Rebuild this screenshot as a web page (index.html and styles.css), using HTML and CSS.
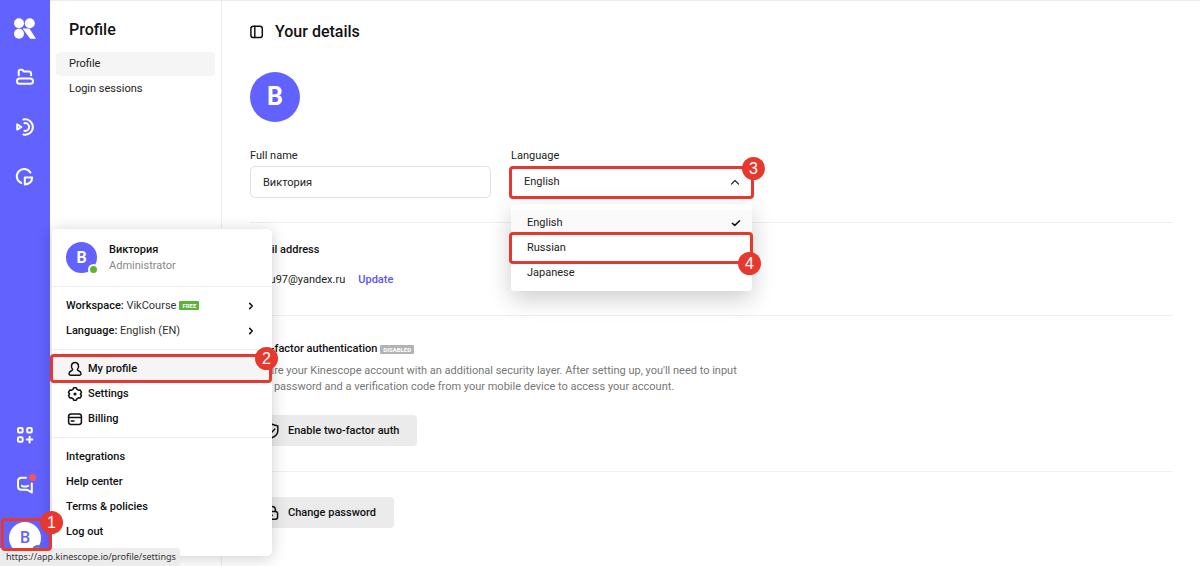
FILE: index.html
```
<!DOCTYPE html>
<html lang="en">
<head>
<meta charset="utf-8">
<title>Profile</title>
<link rel="stylesheet" href="styles.css">
</head>
<body>
<div class="app">
  <nav class="rail" aria-label="Main">
    <a class="rail-link logo" href="#" aria-label="Kinescope"><svg width="22" height="22" viewBox="0 0 22 22"><circle cx="5" cy="5.3" r="5"/><circle cx="15.8" cy="5.3" r="5"/><circle cx="5" cy="15.8" r="5"/><path d="M8.5 10.6H15.5L22 20.8H16.2L10.8 13.5Z"/></svg></a>
    <a class="rail-link" href="#" aria-label="Projects"><svg class="line" width="20" height="20" viewBox="0 0 20 20"><path d="M3.7 8.3V4.6Q3.7 2.8 5.4 2.8H7.2L9 4.6H14Q16.1 4.6 16.1 7V8.3"/><rect x="2" y="11.4" width="16" height="5.4" rx="2.6"/></svg></a>
    <a class="rail-link" href="#" aria-label="Live"><svg class="line" width="20" height="20" viewBox="0 0 20 20"><path d="M2.2 7.4V12.6L6.4 10Z"/><path d="M9.4 6.2A3.9 3.9 0 1 1 9.4 13.8"/><path d="M8.4 2.5A7.7 7.7 0 1 1 8.4 17.5"/></svg></a>
    <a class="rail-link" href="#" aria-label="Analytics"><svg class="line" width="20" height="20" viewBox="0 0 20 20"><path d="M15.4 5.6A7.3 7.3 0 1 0 6.2 16"/><path d="M9.8 10.4H17.2Q17 16.8 9.8 17.4Z"/></svg></a>
    <span class="rail-space"></span>
    <a class="rail-link" href="#" aria-label="Apps"><svg class="line" width="20" height="20" viewBox="0 0 20 20"><rect x="3" y="3" width="4.6" height="4.6" rx="1"/><rect x="12.2" y="3" width="4.6" height="4.6" rx="1"/><rect x="3" y="12.2" width="4.6" height="4.6" rx="1"/><path d="M14.6 11.8V17.4M11.8 14.6H17.4"/></svg></a>
    <a class="rail-link" href="#" aria-label="Support"><svg class="line" width="20" height="20" viewBox="0 0 20 20"><path d="M11 2.8H6.5Q3 2.8 3 6.3V11.3Q3 14.8 6.5 14.8H12.2L16.8 17.4V8.4M6.8 10.8Q10 12.4 13.2 10.8"/></svg><span class="alert"></span></a>
    <button class="rail-user" type="button" aria-label="Account">В<span class="online"></span><span class="mark mark-user"><b class="step">1</b></span></button>
  </nav>

  <aside class="side">
    <h2 class="title">Profile</h2>
    <a class="side-link current" href="#">Profile</a>
    <a class="side-link" href="#">Login sessions</a>
  </aside>

  <main class="main">
    <section class="block intro">
      <h1 class="title page-title"><svg class="ink" width="14" height="14" viewBox="0 0 14 14"><rect x="0.9" y="1.2" width="11.4" height="11.4" rx="2.4"/><path d="M4.8 1.2V12.6"/></svg>Your details</h1>
      <div class="avatar avatar-big">В</div>
      <div class="fields">
        <div class="field">
          <label for="name">Full name</label>
          <input id="name" class="control" type="text" value="Виктория">
        </div>
        <div class="field">
          <label for="lang">Language</label>
          <div class="picker">
            <select id="lang" class="control"><option>English</option><option>Russian</option><option>Japanese</option></select>
            <svg class="caret" width="10" height="10" viewBox="0 0 10 10"><path d="M1.5 7L5 3.5L8.5 7"/></svg>
            <span class="mark mark-picker"><b class="step">3</b></span>
            <div class="options">
              <button type="button" class="option chosen">English<svg width="10" height="10" viewBox="0 0 10 10"><path d="M1.4 5.4L3.8 7.4L8.6 2.8"/></svg></button>
              <button type="button" class="option">Russian<span class="mark mark-option"><b class="step">4</b></span></button>
              <button type="button" class="option">Japanese</button>
            </div>
          </div>
        </div>
      </div>
    </section>
    <section class="block email">
      <h3 class="heading">Email address</h3>
      <p class="mail"><span>vikau97@yandex.ru</span><a class="update" href="#">Update</a></p>
    </section>
    <section class="block">
      <h3 class="heading">Two-factor authentication<span class="tag">DISABLED</span></h3>
      <p class="note">Secure your Kinescope account with an additional security layer. After setting up, you'll need to input<br>your password and a verification code from your mobile device to access your account.</p>
      <button class="action" type="button"><svg class="ink" width="16" height="16" viewBox="0 0 16 16"><path d="M8 1.3L13.8 3V8Q13.8 12.5 8 14.7Q2.2 12.5 2.2 8V3ZM5.3 7.8L7.3 9.8L10.8 6"/></svg>Enable two-factor auth</button>
    </section>
    <section class="block">
      <button class="action" type="button"><svg class="ink" width="16" height="16" viewBox="0 0 16 16"><rect x="2.2" y="6.6" width="11.4" height="7.6" rx="2.2"/><path d="M4.6 6.4V5Q4.6 1.6 8 1.6T11.4 5V6.4M8 10V10.8"/></svg>Change password</button>
    </section>
  </main>
</div>

<div class="menu">
  <div class="menu-head">
    <div class="avatar avatar-small">В<span class="online"></span></div>
    <div class="who"><strong>Виктория</strong><span>Administrator</span></div>
  </div>
  <div class="group">
    <a class="item" href="#">Workspace:&nbsp;<span class="value">VikCourse</span><span class="tag free">FREE</span><svg class="go" width="8" height="10" viewBox="0 0 8 10"><path d="M2.7 2.4L5.3 5L2.7 7.6"/></svg></a>
    <a class="item" href="#">Language:&nbsp;<span class="value">English (EN)</span><svg class="go" width="8" height="10" viewBox="0 0 8 10"><path d="M2.7 2.4L5.3 5L2.7 7.6"/></svg></a>
  </div>
  <div class="group">
    <a class="item with-icon active" href="#"><svg class="ink" width="16" height="16" viewBox="0 0 16 16"><path d="M5.6 8.4C3.2 5.6 4.6 1.6 8 1.6S12.8 5.6 10.4 8.4Q10.3 9.2 11.6 9.7Q14 10.6 14 12.8Q14 14.2 12.6 14.2H3.4Q2 14.2 2 12.8Q2 10.6 4.4 9.7Q5.7 9.2 5.6 8.4Z"/></svg>My profile<span class="mark mark-item"><b class="step">2</b></span></a>
    <a class="item with-icon" href="#"><svg class="ink" width="16" height="16" viewBox="0 0 16 16"><path d="M6.7 1.7H9.3L10 3.4L11.4 4.2L13.2 4L14.5 6.3L13.4 8L14.5 9.7L13.2 12L11.4 11.8L10 12.6L9.3 14.3H6.7L6 12.6L4.6 11.8L2.8 12L1.5 9.7L2.6 8L1.5 6.3L2.8 4L4.6 4.2L6 3.4Z"/><circle cx="8" cy="8" r="0.8"/></svg>Settings</a>
    <a class="item with-icon" href="#"><svg class="ink" width="16" height="16" viewBox="0 0 16 16"><rect x="1.6" y="3" width="12.8" height="10.4" rx="2.4"/><path d="M1.6 6.6H14.4M4.2 10H7"/></svg>Billing</a>
  </div>
  <div class="group">
    <a class="item" href="#">Integrations</a>
    <a class="item" href="#">Help center</a>
    <a class="item" href="#">Terms &amp; policies</a>
    <a class="item" href="#">Log out</a>
  </div>
</div>
<div class="status">https://app.kinescope.io/profile/settings</div>
</body>
</html>
```
FILE: styles.css
```
* { box-sizing: border-box; }
body {
  margin: 0;
  font: 11px/16px Roboto, "Noto Sans", sans-serif;
  color: #222;
  background: #fff;
}
a { color: inherit; text-decoration: none; }
button, input, select { font: inherit; color: inherit; }
button { cursor: pointer; }
svg { display: block; flex: none; fill: none; stroke-linecap: round; stroke-linejoin: round; }
h1, h2, h3, p { margin: 0; }

.app { display: flex; min-height: 100vh; }

/* Left rail */
.rail {
  display: flex;
  flex-direction: column;
  align-items: center;
  width: 50px;
  padding: 6px 0 12px;
  background: #6262ff;
}
.rail-link {
  position: relative;
  display: grid;
  place-items: center;
  width: 50px;
  height: 50px;
}
.logo { height: 46px; }
.logo svg { fill: #fff; }
.line { stroke: #fff; stroke-width: 2; }
.rail-space { flex: 1; }
.alert {
  position: absolute;
  top: 14px;
  right: 14px;
  width: 7px;
  height: 7px;
  border-radius: 50%;
  background: #f9505c;
}
.rail-user {
  position: relative;
  width: 32px;
  height: 32px;
  margin-top: 12px;
  padding: 0;
  border: 0;
  border-radius: 50%;
  background: #fff;
  color: #6262ff;
  font-size: 16px;
  font-weight: 500;
}
.online {
  position: absolute;
  right: -2px;
  bottom: -2px;
  width: 11px;
  height: 11px;
  border: 2px solid #fff;
  border-radius: 50%;
  background: #5cb338;
}
.rail-user .online { border-color: #6262ff; }

/* Section list */
.side {
  width: 172px;
  padding: 19px 6px;
  border-top: 1px solid #ececec;
  border-right: 1px solid #eee;
}
.title { font-size: 16px; line-height: 20px; font-weight: 500; color: #111; }
.side .title { padding: 0 13px; margin-bottom: 12px; }
.side-link { display: block; padding: 4px 13px; margin-bottom: 1px; border-radius: 4px; }
.current { background: #f5f5f5; }

/* Details */
.main {
  flex: 1;
  min-width: 0;
  padding: 0 27px 0 28px;
  border-top: 1px solid #ececec;
}
.block { padding: 25px 0; border-bottom: 1px solid #f0f0f0; }
.block:last-child { border-bottom: 0; }
.intro { padding: 21px 0 24px; }
.email { padding: 19px 0 27px; }
.page-title { display: flex; align-items: center; gap: 11px; }
.ink { stroke: #111; stroke-width: 1.5; }
.avatar {
  position: relative;
  display: grid;
  place-items: center;
  border-radius: 50%;
  background: #6262ff;
  color: #fff;
  font-weight: 700;
}
.avatar-big { width: 50px; height: 50px; margin: 30px 0 26px; font-size: 25px; line-height: 30px; }
.avatar-small { width: 31px; height: 31px; font-size: 16px; }
.fields { display: flex; gap: 20px; }
.field { width: 241px; }
.field label { display: block; margin-bottom: 2px; }
.control {
  display: block;
  width: 100%;
  height: 32px;
  padding: 0 12px;
  border: 1px solid #e2e2e2;
  border-radius: 5px;
  background: #fff;
  appearance: none;
}
.picker { position: relative; }
.caret {
  position: absolute;
  right: 12px;
  top: 11px;
  stroke: #333;
  stroke-width: 1.3;
  pointer-events: none;
}
.options {
  position: absolute;
  z-index: 1;
  top: 38px;
  left: 0;
  right: 0;
  padding: 6px 0;
  border-radius: 4px;
  background: #fff;
  box-shadow: 0 8px 24px rgba(0, 0, 0, .2);
}
.option {
  position: relative;
  display: flex;
  align-items: center;
  justify-content: space-between;
  width: 100%;
  height: 25px;
  padding: 0 11px 0 16px;
  border: 0;
  border-radius: 4px;
  background: #fff;
}
.chosen { background: #fafafa; }
.option svg { stroke: #111; stroke-width: 1.5; }
.heading {
  display: flex;
  align-items: center;
  font-size: 11px;
  font-weight: 500;
  color: #111;
}
.tag {
  margin-left: 3px;
  padding: 0 3px;
  border-radius: 1px;
  background: #b3b3b3;
  color: #fff;
  font-size: 6px;
  line-height: 9px;
  font-weight: 700;
}
.free { background: #5cb338; }
.mail { display: flex; gap: 13px; margin-top: 14px; }
.update { color: #5b55f5; font-weight: 500; }
.note { margin: 6px 0 20px; color: #777; }
.action {
  display: flex;
  align-items: center;
  gap: 8px;
  height: 31px;
  padding: 0 18px 0 14px;
  border: 0;
  border-radius: 4px;
  background: #ebebeb;
  color: #111;
  font-weight: 500;
}

/* Account menu */
.menu {
  position: absolute;
  left: 52px;
  bottom: 10px;
  width: 220px;
  padding-bottom: 6px;
  border-radius: 5px;
  background: #fff;
  box-shadow: 0 2px 16px rgba(0, 0, 0, .2);
}
.menu-head { display: flex; gap: 12px; padding: 13px 14px 12px; }
.who { display: flex; flex-direction: column; color: #888; }
.who strong { color: #111; font-weight: 500; }
.group { padding: 6px 0; border-top: 1px solid #eee; }
.item {
  position: relative;
  display: flex;
  align-items: center;
  height: 25px;
  padding: 0 17px 0 14px;
  font-weight: 500;
  color: #111;
}
.value { font-weight: 400; color: #333; }
.go { margin-left: auto; stroke: #111; stroke-width: 1.5; }
.with-icon { gap: 5px; padding-left: 15px; }
.active { background: #f5f5f5; }

/* Numbered callouts */
.mark {
  position: absolute;
  z-index: 2;
  border: 3px solid #e5392f;
  border-radius: 4px;
  pointer-events: none;
}
.step {
  position: absolute;
  width: 23px;
  height: 23px;
  border-radius: 50%;
  background: #e5392f;
  color: #fff;
  font: 16px/23px "Liberation Sans", sans-serif;
  text-align: center;
}
.mark-user { inset: -4px -11px 3px -8px; }
.mark-user .step { top: -10px; right: -14px; }
.mark-item { inset: -2px 0 -2px -2px; }
.mark-item .step { top: -10px; right: -9px; }
.mark-picker { inset: 0 -2px -1px -2px; }
.mark-picker .step { top: -12px; right: -14px; }
.mark-option { inset: -3px -1px -4px -2px; }
.mark-option .step { right: -11px; bottom: -14px; }

/* Link preview in the corner */
.status {
  position: absolute;
  z-index: 1;
  left: 0;
  bottom: 0;
  padding: 1px 4px 1px 6px;
  border-radius: 0 3px 0 0;
  background: #ececec;
  color: #333;
  font: 9px/16px "Noto Sans", sans-serif;
}
```
